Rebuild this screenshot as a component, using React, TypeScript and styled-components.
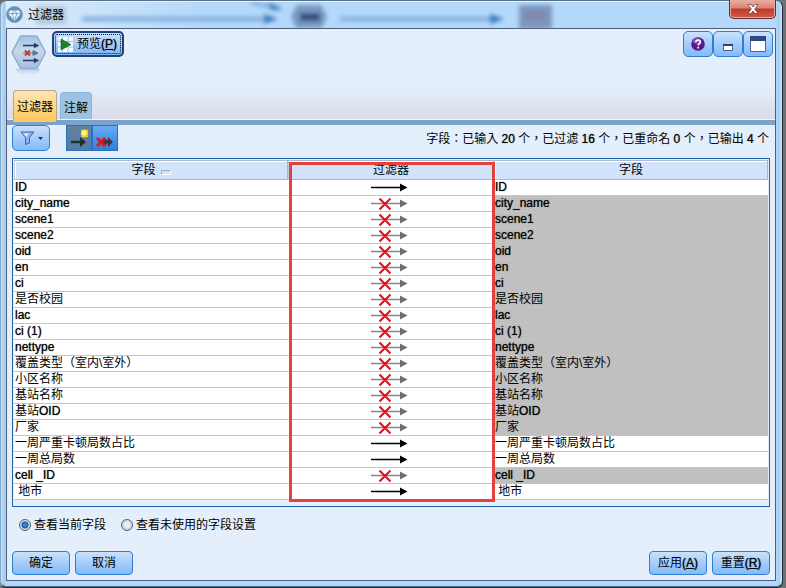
import React, { useId, useState } from "react";
import styled, { createGlobalStyle, css } from "styled-components";

const GlobalStyle = createGlobalStyle`
  * { box-sizing: border-box; }
  body {
    margin: 0;
    background: #6f7277;
    color: #000;
    font: 12px/16px "Liberation Sans", "Noto Sans CJK SC", sans-serif;
  }
  button, input { font: inherit; color: inherit; }
`;

const Window = styled.div`
  display: flex;
  flex-direction: column;
  min-height: 100vh;
  margin-right: 3px;
  padding: 0 6px 6px 5px;
  border: 1px solid #1d2a38;
  border-top-color: #5b7187;
  border-left-color: #7fa9cb;
  border-radius: 7px 7px 6px 6px;
  background: linear-gradient(to right, #c9e4fb 0, #a4c9ec 3px, #b4d8fa 6px, #b4d8fa calc(100% - 6px), #a9cdf0 calc(100% - 3px), #d3ebfd 100%);
  box-shadow: inset 0 1px 0 #d9f4ff, inset 0 -1px 0 #4c6f92;
  position: relative;
`;

const TitleBar = styled.header`
  display: flex;
  height: 27px;
  position: relative;
`;

const Backdrop = styled.svg`
  position: absolute;
  inset: 1px 0 0 0;
  width: 100%;
  height: 26px;
`;

const Title = styled.h1`
  display: flex;
  align-items: center;
  gap: 5px;
  margin: 0;
  font-size: 12px;
  font-weight: 400;
  position: relative;
`;

const CloseButton = styled.button`
  display: grid;
  place-items: center;
  width: 47px;
  height: 19px;
  margin: -1px 0 0 auto;
  padding: 0 0 1px;
  border: 1px solid #5e2b2d;
  border-top: 0;
  border-radius: 0 0 5px 5px;
  background: linear-gradient(#e9b0a6 0, #d98274 45%, #c03a26 50%, #cf5a47 100%);
  box-shadow: inset 0 0 0 1px #eaa99d;
  position: relative;
`;

const Client = styled.main`
  display: flex;
  flex-direction: column;
  flex: 1;
  border: 1px solid #4d5f7e;
  background: #e4effb;
`;

const Head = styled.div`
  display: flex;
  justify-content: space-between;
  align-items: flex-start;
  height: 61px;
  padding: 2px 2px 0 3px;
`;

const HeadArea = styled.div`
  background: linear-gradient(#e4effb 0, #e4effb 60%, #d8d8e4 100%);
`;

const HeadLeft = styled.div`
  display: flex;
  gap: 5px;
`;

const blueFace = css`
  border: 1px solid #2f7fd0;
  background: linear-gradient(#cbe1fb 0, #a9cffa 45%, #83bafa 100%);
`;

const PreviewButton = styled.button`
  display: flex;
  align-items: center;
  gap: 4px;
  width: 72px;
  height: 26px;
  padding: 0 4px;
  border: 2px solid #17447c;
  border-radius: 5px;
  background: linear-gradient(#cbe1fb, #83b5f2);
  outline: 1px dotted #111;
  outline-offset: -4px;
  white-space: nowrap;
`;

const WindowButtons = styled.div`
  display: flex;
`;

const SquareButton = styled.button`
  ${blueFace}
  display: grid;
  place-items: center;
  width: 30px;
  height: 26px;
  padding: 0;
  border-radius: 5px;
`;

const Tabs = styled.div`
  display: flex;
  align-items: flex-end;
  gap: 3px;
  height: 29px;
  padding-left: 6px;
`;

const Tab = styled.button<{ $active: boolean }>`
  height: ${(p) => (p.$active ? 32 : 27)}px;
  width: ${(p) => (p.$active ? 44 : 32)}px;
  margin-bottom: ${(p) => (p.$active ? -3 : 0)}px;
  padding: ${(p) => (p.$active ? "0" : "4px 0 0")};
  border: 1px solid ${(p) => (p.$active ? "#b7a78c" : "#8db6da")};
  border-bottom: 0;
  border-radius: 4px 4px 0 0;
  background: ${(p) => (p.$active ? "linear-gradient(#fde6b4, #ffd27c 60%, #fdc85a)" : "#9cc3e3")};
  white-space: nowrap;
`;

const TabLine = styled.div`
  height: 6px;
  border-top: 1px solid #eef4fb;
  background: #7aa2cb;
`;

const Body = styled.section`
  display: flex;
  flex-direction: column;
  flex: 1;
  padding: 0 5px 5px;
`;

const Toolbar = styled.div`
  display: flex;
  align-items: flex-start;
  height: 26px;
`;

const FilterButton = styled.button`
  ${blueFace}
  display: flex;
  align-items: center;
  justify-content: center;
  gap: 3px;
  width: 38px;
  height: 26px;
  margin-right: 16px;
  padding: 0;
  border-radius: 5px;
`;

const ToggleButton = styled.button<{ $pressed: boolean }>`
  display: grid;
  place-items: center;
  width: 26px;
  height: 26px;
  padding: 0;
  border: 1px solid #2b6fc0;
  background: ${(p) => (p.$pressed ? "linear-gradient(#64829f, #527aa5)" : "linear-gradient(#6aacf4, #2f80dc)")};
`;

const Status = styled.output`
  margin-left: auto;
  padding: 6px 1px 0 0;
  font-family: "Liberation Sans", "Noto Sans CJK TC", sans-serif;
  white-space: nowrap;
`;

const Latin = styled.span`
  text-shadow: 0 0 1px rgba(0, 0, 0, 0.7);
`;

const TableFrame = styled.div`
  margin-top: 7px;
  padding: 1px 1px 6px;
  border: 1px solid #1f63a8;
  position: relative;
`;

const Table = styled.table`
  width: 100%;
  table-layout: fixed;
  border-collapse: separate;
  border-spacing: 0;
  background: #fff;
`;

const MiddleColumn = styled.col`
  width: 206px;
`;

const HeadCell = styled.th`
  height: 20px;
  padding: 0;
  border: 1px solid #b0b8c6;
  border-left-color: #c4ccd8;
  background: #d0e3fa;
  box-shadow: inset 0 1px 0 #fff, inset 1px 0 0 #fff;
  font-weight: 400;
  line-height: 18px;
`;

const SortMark = styled.svg`
  margin-left: 5px;
  vertical-align: -1px;
`;

const Cell = styled.td<{ $muted?: boolean }>`
  height: 16px;
  padding: 0 1px;
  border-bottom: 1px solid ${(p) => (p.$muted ? "#bcc5c9" : "#b4c9db")};
  background: ${(p) => (p.$muted ? "#c0c0c0" : "#fff")};
  line-height: 15px;
  white-space: pre;
  overflow: hidden;
`;

const ArrowCell = styled(Cell)`
  padding: 0 5px 0 0;
  text-align: center;
  line-height: 0;
`;

const Highlight = styled.div`
  position: absolute;
  top: 3px;
  bottom: 4px;
  left: 50%;
  width: 206px;
  margin-left: -102px;
  border: 3px solid #e6403d;
  pointer-events: none;
`;

const Options = styled.div`
  display: flex;
  gap: 15px;
  margin-top: 10px;
  padding-left: 7px;
`;

const Option = styled.label`
  display: flex;
  align-items: center;
  gap: 3px;
`;

const Radio = styled.input`
  appearance: none;
  width: 12px;
  height: 12px;
  margin: 0;
  border: 1px solid #4b6480;
  border-radius: 50%;
  background: radial-gradient(circle, #e8edf3 0 3px, #c3ccd6 4px);
  box-shadow: inset 0 0 0 1px #d5dde6;
  &:checked {
    background: radial-gradient(circle, #3584d2 0 2px, #1a4e89 3px, #c9dff2 4px);
  }
`;

const Actions = styled.footer`
  display: flex;
  gap: 5px;
  margin-top: auto;
`;

const ActionButton = styled.button<{ $pushed?: boolean }>`
  ${blueFace}
  width: 58px;
  height: 24px;
  margin-left: ${(p) => (p.$pushed ? "auto" : "0")};
  padding: 0;
  border-radius: 4px;
  white-space: nowrap;
`;

const Hex = () => (
  <svg width="37" height="46" viewBox="0 0 37 46" aria-hidden="true">
    <defs>
      <linearGradient id="hexFace" x1="0" y1="0" x2="0" y2="1">
        <stop offset="0" stopColor="#9fc4e6" />
        <stop offset=".45" stopColor="#c9d8ed" />
        <stop offset="1" stopColor="#a4bfdd" />
      </linearGradient>
      <linearGradient id="hexFade" x1="0" y1="0" x2="0" y2="1">
        <stop offset="0" stopColor="#bccfe5" />
        <stop offset="1" stopColor="#e4effb" />
      </linearGradient>
    </defs>
    <path d="M5 38h26l-5 6H10z" fill="url(#hexFade)" />
    <path d="M10.500 5h16.500l8.500 16.500-8.500 16H10.500L2 21.500z" fill="url(#hexFace)" stroke="#8baed2" strokeWidth="1.500" strokeLinejoin="round" />
    <g stroke="#253963" strokeWidth="1.300" fill="#253963">
      <path d="M13 14.500h13M13 29.500h13" />
      <path d="M24 12l5 2.500-5 2.500zM24 27l5 2.500-5 2.500z" strokeWidth=".3" />
    </g>
    <path d="M13 22h13M23 19.500l5 2.500-5 2.500z" stroke="#5e7994" fill="#5e7994" />
    <path d="M15 19.500l5 5m0-5l-5 5" stroke="#c6332f" strokeWidth="1.800" />
  </svg>
);

const Arrow = ({ blocked }: { blocked: boolean }) => (
  <svg width="38" height="15" viewBox="0 0 38 15" role="img" aria-label={blocked ? "已过滤" : "通过"}>
    <path d="M1 7.500h30" stroke={blocked ? "#858585" : "#000"} strokeWidth="1.500" />
    <path d="M30 3.500l7.500 4-7.500 4z" fill={blocked ? "#707070" : "#000"} />
    {blocked && <path d="M9.500 2.500l11 11m0-11l-11 11" stroke="#d9131d" strokeWidth="2" />}
  </svg>
);

/** Sets Latin runs slightly heavier than the surrounding Chinese text. */
const Label = ({ text }: { text: string }) => (
  <>
    {text.split(/([A-Za-z0-9_()]+)/).map((part, i) => (i % 2 ? <Latin key={i}>{part}</Latin> : part))}
  </>
);

const FIELDS: { name: string; passes?: boolean }[] = [
  { name: "ID", passes: true },
  { name: "city_name" },
  { name: "scene1" },
  { name: "scene2" },
  { name: "oid" },
  { name: "en" },
  { name: "ci" },
  { name: "是否校园" },
  { name: "lac" },
  { name: "ci (1)" },
  { name: "nettype" },
  { name: "覆盖类型（室内\\室外）" },
  { name: "小区名称" },
  { name: "基站名称" },
  { name: "基站OID" },
  { name: "厂家" },
  { name: "一周严重卡顿局数占比", passes: true },
  { name: "一周总局数", passes: true },
  { name: "cell _ID" },
  { name: " 地市", passes: true },
];

const VIEWS = ["查看当前字段", "查看未使用的字段设置"];

export default function App() {
  const [tab, setTab] = useState(0);
  const [mode, setMode] = useState(0);
  const [view, setView] = useState(0);
  const group = useId();

  return (
    <>
      <GlobalStyle />
      <Window>
        <TitleBar>
          <Backdrop viewBox="0 0 770 26" preserveAspectRatio="xMinYMin slice" aria-hidden="true">
            <defs>
              <filter id="soft" x="-20%" y="-100%" width="140%" height="300%">
                <feGaussianBlur stdDeviation="2.200" />
              </filter>
              <linearGradient id="shine">
                <stop offset="0" stopColor="#dcecfa" />
                <stop offset="1" stopColor="#dcecfa" stopOpacity="0" />
              </linearGradient>
            </defs>
            <rect width="200" height="26" fill="url(#shine)" />
            <g filter="url(#soft)">
              <path d="M76 17h190M334 17h160" stroke="#86b2e0" strokeWidth="5" />
              <path d="M245 0l28 7" stroke="#86b2e0" strokeWidth="4" />
              <path d="M258 12l14 5-14 5zM484 12l14 5-14 5zM262 0l15 7-12 1z" fill="#3b7cba" />
              <path d="M291 3h24l6 11-5 12h-26l-5-12z" fill="#7899c1" />
              <path d="M294 15h20" stroke="#35507d" strokeWidth="8" />
              <path d="M513 3h33v24h-33z" fill="#7a98c0" />
              <path d="M519 9h21v9h-21z" fill="#8186ae" />
              <path d="M30 4h30v18H30z" fill="#b2c7db" />
            </g>
          </Backdrop>
          <Title>
            <svg width="17" height="17" viewBox="0 0 17 17" aria-hidden="true">
              <circle cx="8.500" cy="8.500" r="8" fill="#5b91bb" stroke="#82a9c6" />
              <path d="M4 4.500h9l2 3-6.500 7.500L2 7.500z" fill="#e9f5fa" />
              <path d="M2 7.500h13M6 7.500l2.500 7 2.500-7-2.500-3z" fill="none" stroke="#7ba8c6" />
            </svg>
            过滤器
          </Title>
          <CloseButton aria-label="关闭">
            <svg width="12" height="10" viewBox="0 0 12 10" aria-hidden="true">
              <path d="M1 .5h3l2 2.500L8 .5h3L7.700 5 11 9.500H8L6 7 4 9.500H1L4.300 5z" fill="#fff" stroke="#70484a" strokeWidth=".8" />
            </svg>
          </CloseButton>
        </TitleBar>

        <Client>
          <HeadArea>
            <Head>
              <HeadLeft>
                <Hex />
                <PreviewButton>
                  <svg width="15" height="15" viewBox="0 0 15 15" aria-hidden="true">
                    <path d="M0 0h15v15H0z" fill="#f4f9fd" />
                    <path d="M0 4.500h15M0 10h15M4.500 0v15M10 0v15" stroke="#9cbfe0" />
                    <path d="M3 2l10 5.500L3 13z" fill="#16852c" stroke="#0a5b1c" strokeWidth=".6" />
                  </svg>
                  <span>
                    预览<Latin>(<u>P</u>)</Latin>
                  </span>
                </PreviewButton>
              </HeadLeft>
              <WindowButtons>
                <SquareButton aria-label="帮助">
                  <svg width="14" height="14" viewBox="0 0 14 14" aria-hidden="true">
                    <circle cx="7" cy="7" r="6.800" fill="#58198d" />
                    <ellipse cx="6" cy="4" rx="4.500" ry="3" fill="#9159ba" opacity=".7" />
                    <path d="M4.800 5.300c0-3 4.600-2.900 4.600-.2 0 1.700-2.300 1.600-2.300 3.500M7.100 9.800v1.700" fill="none" stroke="#fff" strokeWidth="1.700" />
                  </svg>
                </SquareButton>
                <SquareButton aria-label="最小化">
                  <svg width="10" height="14" viewBox="0 0 10 14" aria-hidden="true">
                    <path d="M.5 7.500h9v6h-9z" fill="#fff" stroke="#48658e" />
                    <path d="M0 7h10v2H0z" fill="#28456f" />
                  </svg>
                </SquareButton>
                <SquareButton aria-label="最大化">
                  <svg width="16" height="16" viewBox="0 0 16 16" aria-hidden="true">
                    <path d="M.5 .5h15v15H.5z" fill="#fff" stroke="#48658e" />
                    <path d="M0 0h16v5H0z" fill="#2b4a80" />
                  </svg>
                </SquareButton>
              </WindowButtons>
            </Head>
            <Tabs role="tablist">
              {["过滤器", "注解"].map((name, i) => (
                <Tab key={name} role="tab" aria-selected={tab === i} $active={tab === i} onClick={() => setTab(i)}>
                  {name}
                </Tab>
              ))}
            </Tabs>
            <TabLine />
          </HeadArea>

          <Body>
            <Toolbar>
              <FilterButton aria-label="筛选">
                <svg width="15" height="14" viewBox="0 0 15 14" aria-hidden="true">
                  <path d="M1 1h13L9.500 6.500V12l-4 1.500v-7z" fill="#8fb0ec" stroke="#4360ad" />
                  <path d="M3 2.200h6L6.500 6z" fill="#d5e5ff" />
                </svg>
                <svg width="5" height="3" viewBox="0 0 5 3" aria-hidden="true">
                  <path d="M0 0h5L2.500 3z" fill="#173a68" />
                </svg>
              </FilterButton>
              <ToggleButton aria-label="包括字段" aria-pressed={mode === 0} $pressed={mode === 0} onClick={() => setMode(0)}>
                <svg width="20" height="20" viewBox="0 0 20 20" aria-hidden="true">
                  <path d="M12 1.500l2 .6 1.500-1 1.500 1 2-.6-.5 2.300 1 1.700-1 1.700.5 2-2-.4-1.500 1-1.500-1-2 .4.500-2-1-1.700 1-1.700z" fill="#ffd92e" />
                  <path d="M13 3h4v4h-4z" fill="#fff58c" />
                  <path d="M2 14h10" stroke="#252c33" strokeWidth="2.500" />
                  <path d="M11 9l6 5-6 5z" fill="#252c33" />
                </svg>
              </ToggleButton>
              <ToggleButton aria-label="过滤字段" aria-pressed={mode === 1} $pressed={mode === 1} onClick={() => setMode(1)}>
                <svg width="20" height="20" viewBox="0 0 20 20" aria-hidden="true">
                  <path d="M6 14h8" stroke="#252c33" strokeWidth="3" />
                  <path d="M9 9l5 5-5 5zM13 9l5 5-5 5z" fill="#3b3542" />
                  <path d="M2 10l8 8m0-8l-8 8" stroke="#e0191c" strokeWidth="3" />
                </svg>
              </ToggleButton>
              <Status>
                <Label text="字段：已输入 20 个，已过滤 16 个，已重命名 0 个，已输出 4 个" />
              </Status>
            </Toolbar>

            <TableFrame>
              <Table>
                <colgroup>
                  <col />
                  <MiddleColumn />
                  <col />
                </colgroup>
                <thead>
                  <tr>
                    <HeadCell>
                      字段
                      <SortMark width="10" height="5" viewBox="0 0 10 5" aria-hidden="true">
                        <path d="M.5 4.500v-4h9" fill="none" stroke="#a6b0bc" />
                        <path d="M9.500 1v3.500H1" fill="none" stroke="#fff" />
                      </SortMark>
                    </HeadCell>
                    <HeadCell>过滤器</HeadCell>
                    <HeadCell>字段</HeadCell>
                  </tr>
                </thead>
                <tbody>
                  {FIELDS.map(({ name, passes = false }) => (
                    <tr key={name}>
                      <Cell><Label text={name} /></Cell>
                      <ArrowCell><Arrow blocked={!passes} /></ArrowCell>
                      <Cell $muted={!passes}><Label text={name} /></Cell>
                    </tr>
                  ))}
                </tbody>
              </Table>
              <Highlight />
            </TableFrame>

            <Options role="radiogroup" aria-label="查看">
              {VIEWS.map((text, i) => (
                <Option key={text}>
                  <Radio type="radio" name={group} checked={view === i} onChange={() => setView(i)} />
                  {text}
                </Option>
              ))}
            </Options>

            <Actions>
              <ActionButton>确定</ActionButton>
              <ActionButton>取消</ActionButton>
              <ActionButton $pushed>
                应用<Latin>(<u>A</u>)</Latin>
              </ActionButton>
              <ActionButton>
                重置<Latin>(<u>R</u>)</Latin>
              </ActionButton>
            </Actions>
          </Body>
        </Client>
      </Window>
    </>
  );
}
